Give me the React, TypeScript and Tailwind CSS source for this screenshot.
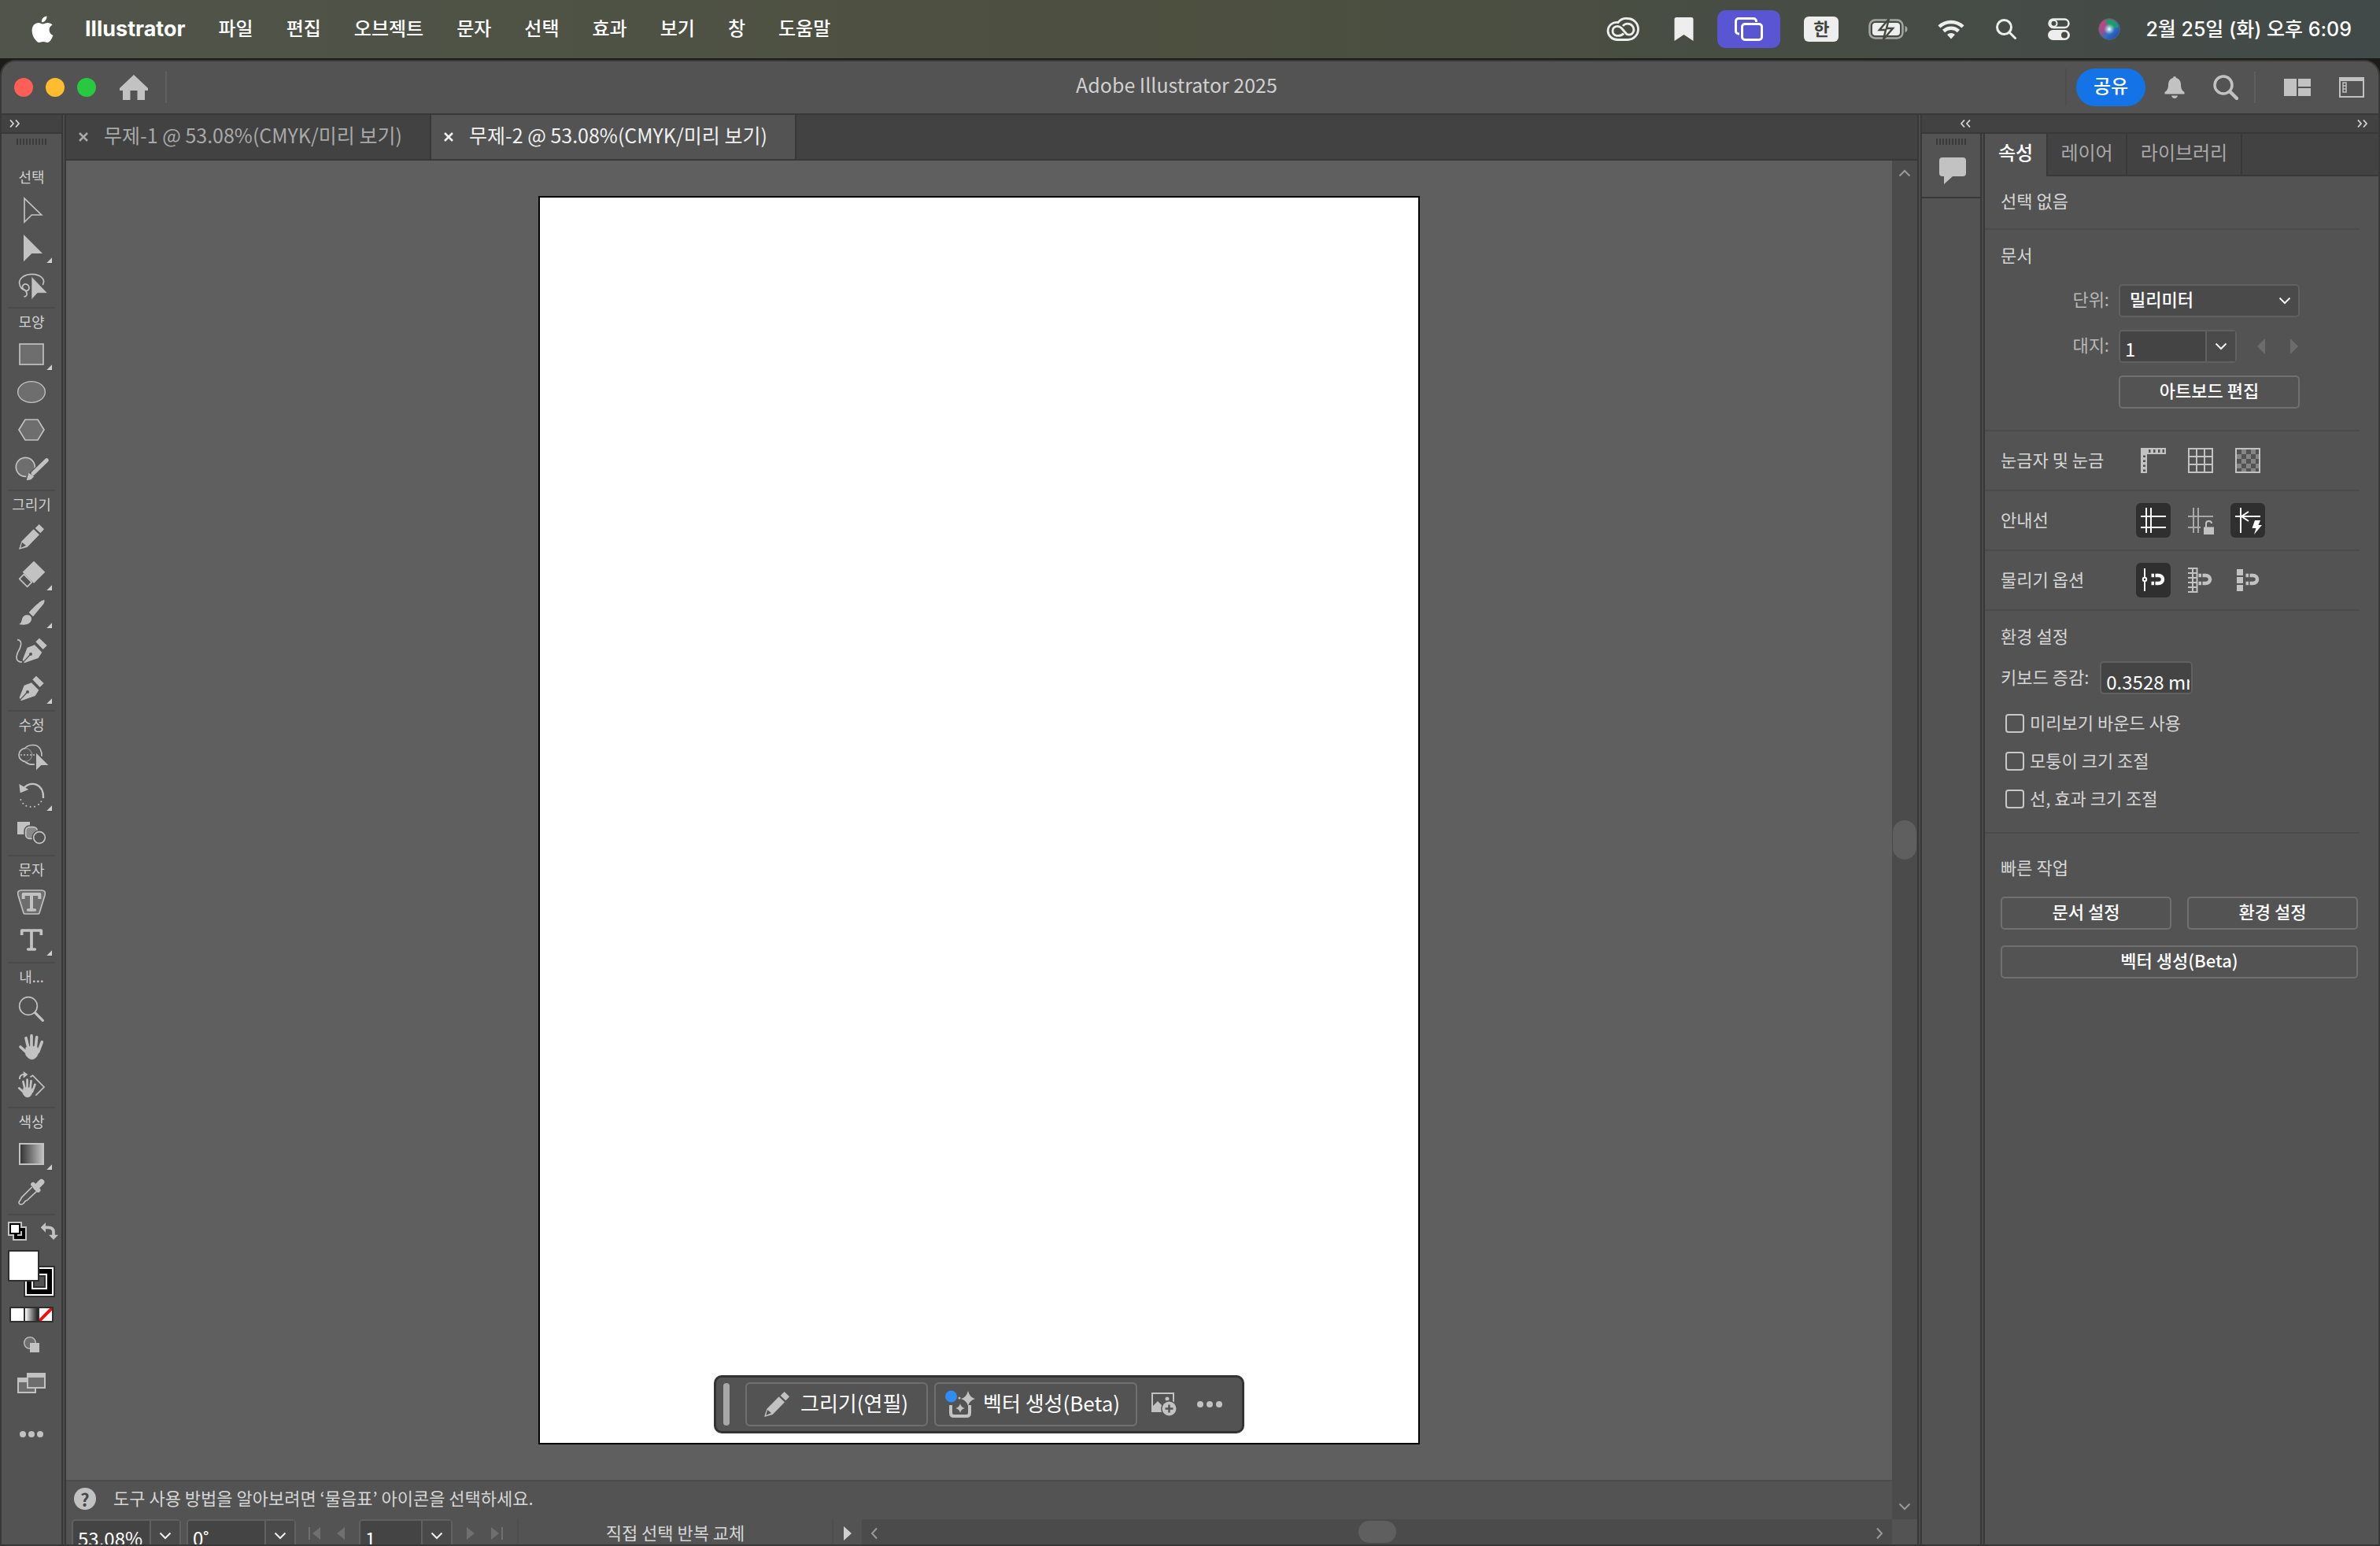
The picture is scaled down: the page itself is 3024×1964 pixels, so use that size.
import type { ReactNode } from "react";

const KR = "font-['Noto_Sans_CJK_KR',sans-serif]";
const MENU_FONT = "font-[Inter,'Noto_Sans_CJK_KR',sans-serif]";

const INK = "#c2c2c2";
const DIM = "#6e6e6e";
const PANEL = "#535353";

/* ---------- macOS menu bar ---------- */

const menus = ["파일", "편집", "오브젝트", "문자", "선택", "효과", "보기", "창", "도움말"];

function AppleLogo() {
  return (
    <svg viewBox="0 0 28 34" className="h-[34px] w-7" fill="#fff">
      <path d="M19.4 0.5c.3 2-.5 4-1.700 5.400-1.200 1.500-3.100 2.500-4.900 2.400-.3-1.900.6-3.900 1.700-5.200C15.800 1.600 17.800.6 19.400.5z" />
      <path d="M26.600 11.600c-3.100 1.900-4 4.200-4 6.500 0 3.100 1.800 5.800 4.900 7-.8 2.400-1.900 4.400-3.200 6.200-1.200 1.600-2.400 2.700-4.100 2.700-1.800 0-2.700-1-5.300-1-2.600 0-3.500 1-5.200 1-1.900 0-3.200-1.400-4.500-3.200C2.300 27.800.600 22.900.600 18.800.600 12.700 4.500 9 8.700 9c2.300 0 4.200 1.400 5.700 1.400 1.400 0 3.600-1.500 6.300-1.500 2.200 0 4.500.900 5.900 2.700z" />
    </svg>
  );
}

function CreativeCloud() {
  return (
    <svg viewBox="0 0 42 30" className="h-[30px] w-[42px]" fill="none" stroke="#eee" strokeWidth="2.800">
      <path d="M15 6.500A13 13 0 0 1 27 1.500A13.500 13.500 0 0 1 27 28.500H14A12 11.500 0 0 1 2 17A11 11 0 0 1 15 6.500z" />
      <path d="M22 20.500C18 25 8 24.500 8 17.500C8 11.500 15 9.500 19 13.500L26 21.500C33 24 37 17 33.500 11.500C30.500 7 24 7 21 11" />
    </svg>
  );
}

function StatusIcons() {
  return (
    <>
      <CreativeCloud />
      <svg viewBox="0 0 25 31" className="ml-[44px] h-[31px] w-[25px]" fill="#eee">
        <path d="M3 0h19a2.500 2.500 0 0 1 2.500 2.500V30L12.500 22 .5 30V2.500A2.500 2.500 0 0 1 3 0z" />
      </svg>
      <button aria-label="화면 공유" className="ml-[30px] flex h-12 w-20 items-center justify-center rounded-[10px] bg-[#5955d3]">
        <svg viewBox="0 0 36 30" className="h-[30px] w-9" fill="none" stroke="#fff" strokeWidth="3">
          <path d="M6 21H5a3.500 3.500 0 0 1-3.500-3.500V5A3.500 3.500 0 0 1 5 1.500h19A3.500 3.500 0 0 1 27.500 5v1" />
          <rect x="9.500" y="8.500" width="25" height="20" rx="3.500" />
        </svg>
      </button>
      <span className="ml-[30px] flex h-8 w-11 items-center justify-center rounded-md bg-[#eee] text-[22px] leading-8 font-bold text-[#3f443c]">한</span>
      <svg viewBox="0 0 50 26" className="ml-[38px] h-[26px] w-[50px]" fill="none">
        <rect x="1.500" y="1.500" width="42" height="23" rx="7" stroke="#a5a8a2" strokeWidth="2.500" />
        <rect x="5" y="5" width="35" height="16" rx="4" fill="#eee" />
        <path d="M46.500 9v8c2-.5 3-2 3-4s-1-3.500-3-4z" fill="#a5a8a2" />
        <path d="M26 0 14 14h8l-3 12 12-14h-8z" fill="#eee" stroke="#454940" strokeWidth="2.500" />
      </svg>
      <svg viewBox="0 0 34 26" className="ml-[38px] h-[26px] w-[34px]" fill="none" stroke="#eee" strokeWidth="4.500">
        <path d="M2 10a21.500 21.500 0 0 1 30 0" />
        <path d="M7.500 15.500a14 14 0 0 1 19 0" />
        <path d="M17 25.500l-5-5.500a7.500 7.500 0 0 1 10 0z" fill="#eee" stroke="none" />
      </svg>
      <svg viewBox="0 0 26 26" className="ml-10 h-[26px] w-[26px]" fill="none" stroke="#eee" strokeWidth="3" strokeLinecap="round">
        <circle cx="10.500" cy="10.500" r="9" />
        <path d="M17.500 17.500l7 7" />
      </svg>
      <svg viewBox="0 0 28 28" className="ml-10 h-7 w-7" fill="none">
        <rect x="1.500" y="1.500" width="25" height="10.500" rx="5.250" stroke="#eee" strokeWidth="2.500" />
        <circle cx="7.500" cy="6.750" r="4" stroke="#eee" strokeWidth="2" />
        <rect x="0" y="15" width="28" height="13" rx="6.500" fill="#eee" />
        <circle cx="21" cy="21.500" r="4" fill="#454940" />
      </svg>
      <svg viewBox="0 0 28 28" className="ml-9 h-7 w-7">
        <defs>
          <linearGradient id="siri" x1="0" y1="0" x2="1" y2="1">
            <stop offset="0" stopColor="#e0406c" />
            <stop offset="0.4" stopColor="#9a4f8c" />
            <stop offset="0.6" stopColor="#2d6fc4" />
            <stop offset="1" stopColor="#1e3fa8" />
          </linearGradient>
          <radialGradient id="siriGlow">
            <stop offset="0" stopColor="#fff" />
            <stop offset="1" stopColor="#8fe9ff" stopOpacity="0" />
          </radialGradient>
        </defs>
        <circle cx="14" cy="14" r="13.500" fill="url(#siri)" stroke="#55606b" />
        <path d="M14 14 9 2.500a13 13 0 0 1 17 9z" fill="#1f9a6e" />
        <circle cx="14" cy="14" r="7" fill="url(#siriGlow)" />
      </svg>
    </>
  );
}

function MenuBar() {
  return (
    <header className={`flex h-[74px] shrink-0 items-center bg-linear-to-r from-[#50544a] via-[#4d503f] to-[#424a49] pr-9 pl-10 text-2xl font-medium text-white ${MENU_FONT}`}>
      <AppleLogo />
      <nav className="ml-10 flex items-center gap-[42px]">
        <button className="text-[27px] font-bold">Illustrator</button>
        {menus.map((m) => (
          <button key={m} className="whitespace-nowrap">{m}</button>
        ))}
      </nav>
      <div className="ml-auto flex items-center">
        <StatusIcons />
        <time className="ml-8 text-[25px] leading-8 whitespace-nowrap">2월 25일 (화) 오후 6:09</time>
      </div>
    </header>
  );
}

/* ---------- window title bar ---------- */

function TitleBar() {
  return (
    <div className="grid h-[66px] shrink-0 grid-cols-[1fr_auto_1fr] items-center">
      <div className="flex items-center pl-4">
        <div className="flex gap-4">
          <button aria-label="닫기" className="size-6 rounded-full bg-[#ff5f57]" />
          <button aria-label="최소화" className="size-6 rounded-full bg-[#febc2e]" />
          <button aria-label="확대" className="size-6 rounded-full bg-[#28c840]" />
        </div>
        <button aria-label="홈" className="ml-[30px]">
          <svg viewBox="0 0 36 32" className="h-8 w-9" fill={INK}>
            <path d="M18 0 36 17v3h-4v12h-9.500V20h-9v12H4V20H0v-3z" />
          </svg>
        </button>
        <span className="ml-[22px] h-10 w-0.5 bg-[#606060]" />
      </div>
      <h1 className={`pr-[34px] pb-2 text-[25px] leading-8 text-[#d0d0d0] ${KR}`}>Adobe Illustrator 2025</h1>
      <div className="flex items-center justify-end pr-[18px]">
        <span className="h-12 w-0.5 bg-[#4d4d4d]" />
        <button className={`ml-3 h-12 w-[88px] rounded-full bg-[#1473e6] pb-1.5 text-2xl font-medium text-white ${KR}`}>공유</button>
        <button aria-label="알림" className="ml-6">
          <svg viewBox="0 0 26 28" className="h-7 w-[26px]" fill={INK}>
            <path d="M11 2a2 2 0 0 1 4 0c4 1 6 4.500 6 8.500 0 5 1.500 7.500 4.500 9.500v2.500H.5V20C3.500 18 5 15.500 5 10.500 5 6.500 7 3 11 2zM9 24.500h8c-.5 2-2 3.500-4 3.500s-3.500-1.500-4-3.500z" />
          </svg>
        </button>
        <button aria-label="검색" className="ml-9">
          <svg viewBox="0 0 32 32" className="size-8" fill="none" stroke={INK} strokeWidth="3.500" strokeLinecap="round">
            <circle cx="13" cy="13" r="11" />
            <path d="M21.500 21.500l8.500 8.500" strokeWidth="4.500" />
          </svg>
        </button>
        <span className="ml-5 h-10 w-0.5 bg-[#606060]" />
        <button aria-label="문서 정렬" className="ml-9">
          <svg viewBox="0 0 34 22" className="h-[22px] w-[34px]" fill={INK}>
            <path d="M0 0h16v22H0zM18 0h16v10H18zM18 12h16v10H18z" />
          </svg>
        </button>
        <button aria-label="작업 영역 전환" className="ml-9">
          <svg viewBox="0 0 32 26" className="h-[26px] w-8" fill="none" stroke={INK} strokeWidth="2">
            <path d="M1 1h30v24H1z" />
            <path d="M1 3h30" strokeWidth="4" />
            <path d="M5 7h4v12H5zM5 11h4M5 15h4" strokeWidth="1.500" />
          </svg>
        </button>
      </div>
    </div>
  );
}

/* ---------- shared pieces ---------- */

function DoubleChevron({ left = false }: { left?: boolean }) {
  return (
    <svg viewBox="0 0 13 10" className="h-2.5 w-[13px]" fill="none" stroke="#d2d2d2" strokeWidth="1.800">
      <path d={left ? "M5 .5 1 5l4 4.500M12 .5 8 5l4 4.500" : "M1 .5 5 5 1 9.500M8 .5 12 5 8 9.500"} />
    </svg>
  );
}

function Grip() {
  return (
    <div className="flex h-2 justify-center gap-0.5">
      {Array.from({ length: 10 }, (_, i) => (
        <span key={i} className="w-0.5 bg-[#3a3a3a]" />
      ))}
    </div>
  );
}

function Chevron({ dir = "down", tone = "#f0f0f0" }: { dir?: "down" | "up" | "left" | "right"; tone?: string }) {
  const d = {
    down: "M1.500 4.500 8 11l6.500-6.500",
    up: "M1.500 11.500 8 5l6.500 6.500",
    left: "M11 1.500 5 8l6 6.500",
    right: "M5 1.500 11 8l-6 6.500",
  }[dir];
  return (
    <svg viewBox="0 0 16 16" className="pointer-events-none size-4" fill="none" stroke={tone} strokeWidth="2">
      <path d={d} />
    </svg>
  );
}

function Gutter() {
  return <div className="w-1.5 shrink-0 border-x-2 border-[#383838] bg-[#4b4b4b]" />;
}

/* ---------- left toolbar ---------- */

type Tool = { name: string; y: number; flyout?: boolean; art: ReactNode };

const nib = (
  <>
    <path d="M86 654 104 608 132 598 160 626 146 648 92 667z" fill={INK} />
    <path d="M88 664 114 636" stroke={PANEL} strokeWidth="4" />
    <circle cx="117" cy="633" r="6" fill={PANEL} />
    <path d="M136 586 150 572 179 600 164 615z" fill={INK} />
  </>
);

const hand = (
  <g stroke={INK} strokeLinecap="round" fill={INK}>
    <path d="M78 750 100 770M99 716 107 750M120 707V750M140 713 136 750M160 731 146 768" strokeWidth="11" fill="none" />
    <path d="M99 752Q120 742 143 752L147 770Q140 796 122 797Q108 797 98 780z" strokeWidth="2" />
  </g>
);

const groups: { label: string; tools: Tool[] }[] = [
  {
    label: "선택",
    tools: [
      { name: "선택 도구", y: 306, art: <path d="M93 336V426L121 399H158z" fill="none" stroke={INK} strokeWidth="5" /> },
      { name: "직접 선택 도구", y: 450, flyout: true, art: <path d="M90 474V577L121 546H162z" fill={INK} /> },
      {
        name: "올가미 도구", y: 594, art: (
          <>
            <path d="M163 666C176 642 150 625 122 625C92 625 72 642 74 660C76 676 86 686 100 688C113 688 114 672 105 665C92 658 80 670 88 681C104 690 110 708 91 711" fill="none" stroke={INK} strokeWidth="5" />
            <path d="M120 634V722L143 697H181z" fill={INK} stroke={PANEL} strokeWidth="2" />
          </>
        ),
      },
    ],
  },
  {
    label: "모양",
    tools: [
      { name: "사각형 도구", y: 858, flyout: true, art: <rect x="75" y="891" width="90" height="78" fill={DIM} stroke={INK} strokeWidth="5" /> },
      { name: "원형 도구", y: 1002, art: <ellipse cx="120" cy="1074" rx="52" ry="40" fill={DIM} stroke={INK} strokeWidth="4" /> },
      { name: "다각형 도구", y: 1146, art: <path d="M72 1218 96 1179H144L168 1218 144 1257H96z" fill={DIM} stroke={INK} strokeWidth="5" /> },
      {
        name: "물방울 브러쉬 도구", y: 1290, art: (
          <>
            <circle cx="97" cy="1360" r="36" fill={DIM} stroke={INK} strokeWidth="5" />
            <path d="M180 1334 108 1404" stroke={PANEL} strokeWidth="26" />
            <path d="M178 1334 126 1384" stroke={INK} strokeWidth="15" strokeLinecap="round" />
            <path d="M109 1382 130 1396 118 1408 101 1411z" fill={INK} />
          </>
        ),
      },
    ],
  },
  {
    label: "그리기",
    tools: [
      {
        name: "연필 도구", y: 114, art: (
          <>
            <path d="M134 153 149 138 168 157 154 172z" fill={INK} />
            <path d="M128 157 150 178 104 225 72 234 82 203z" fill={INK} />
            <path d="M84 207 99 219 79 228z" fill={PANEL} />
          </>
        ),
      },
      {
        name: "지우개 도구", y: 258, flyout: true, art: (
          <>
            <path d="M86 320 129 278 172 320 129 363z" fill={INK} />
            <path d="M74 346 91 329 121 359 104 376z" fill="none" stroke={INK} strokeWidth="5" strokeLinejoin="round" />
          </>
        ),
      },
      {
        name: "페인트브러쉬 도구", y: 402, flyout: true, art: (
          <path d="M168 426Q172 431 166 442L126 490 110 474Q150 430 168 426zM108 484Q122 488 120 502C116 520 96 524 72 519C82 514 82 506 84 500C86 488 96 482 108 484z" fill={INK} />
        ),
      },
      {
        name: "곡률 도구", y: 546, art: (
          <>
            <path d="M66 578C90 580 78 610 68 626C58 650 64 663 84 663" fill="none" stroke={INK} strokeWidth="5" />
            {nib}
          </>
        ),
      },
      { name: "펜 도구", y: 690, flyout: true, art: <g transform="translate(-12 144)">{nib}</g> },
    ],
  },
  {
    label: "수정",
    tools: [
      {
        name: "도형 구성 도구", y: 954, art: (
          <>
            <path d="M95 992C106 978 140 972 153 994Q160 1006 159 1022M96 1044Q112 1056 132 1053" fill="none" stroke={INK} strokeWidth="5" />
            <path d="M97 992A25 25 0 0 1 97 1042" fill="none" stroke="#8a8a8a" strokeWidth="4" />
            <path d="M97 992A25 25 0 1 0 97 1042" fill="none" stroke={INK} strokeWidth="5" />
            <path d="M78 1017H134" stroke={INK} strokeWidth="5" strokeDasharray="6 6" />
            <path d="M138 1010V1075L157 1056H184z" fill={INK} />
          </>
        ),
      },
      {
        name: "회전 도구", y: 1098, flyout: true, art: (
          <>
            <path d="M92 1142C118 1114 168 1126 165 1182" fill="none" stroke={INK} strokeWidth="7" />
            <path d="M73 1128 77 1162 109 1149z" fill={INK} />
            <path d="M79 1188h.1M88 1202h.1M100 1211h.1M116 1215h.1M132 1214h.1M147 1206h.1M157 1195h.1" stroke={INK} strokeWidth="6" strokeLinecap="round" />
          </>
        ),
      },
      {
        name: "블렌드 도구", y: 1242, art: (
          <>
            <rect x="66" y="1272" width="48" height="48" fill={INK} />
            <rect x="98" y="1292" width="44" height="44" rx="14" fill="#8a8a8a" stroke={PANEL} strokeWidth="14" />
            <rect x="98" y="1292" width="44" height="44" rx="14" fill="#8a8a8a" stroke={INK} strokeWidth="5" />
            <circle cx="150" cy="1332" r="22" fill={PANEL} stroke={PANEL} strokeWidth="14" />
            <circle cx="150" cy="1332" r="22" fill={PANEL} stroke={INK} strokeWidth="5" />
          </>
        ),
      },
    ],
  },
  {
    label: "문자",
    tools: [
      {
        name: "문자 손질 도구", y: 126, art: (
          <>
            <path d="M80 153H160Q176 154 171 172L150 240Q149 243 144 243H96Q91 243 90 240L69 172Q64 154 80 153z" fill={DIM} stroke={INK} strokeWidth="5" />
            <path d="M89 186V168H151V186M120 168V228" fill="none" stroke={INK} strokeWidth="12" strokeLinejoin="round" />
            <path d="M107 228H133" stroke={INK} strokeWidth="11" strokeLinecap="round" />
          </>
        ),
      },
      {
        name: "문자 도구", y: 270, flyout: true, art: (
          <>
            <path d="M83 324V306H157V324M120 306V376" fill="none" stroke={INK} strokeWidth="11" strokeLinejoin="round" />
            <path d="M107 378H133" stroke={INK} strokeWidth="11" strokeLinecap="round" />
          </>
        ),
      },
    ],
  },
  {
    label: "내...",
    tools: [
      {
        name: "돋보기 도구", y: 534, art: (
          <>
            <circle cx="108" cy="594" r="34" fill="none" stroke={INK} strokeWidth="5" />
            <path d="M134 620 163 649" stroke={INK} strokeWidth="10" strokeLinecap="round" />
          </>
        ),
      },
      { name: "손 도구", y: 678, art: hand },
      {
        name: "보기 회전 도구", y: 822, art: (
          <>
            <g transform="translate(15 352) scale(.74)">{hand}</g>
            <path d="M115 865 125 859 168 903 136 935" fill="none" stroke={INK} strokeWidth="5" />
            <path d="M75 873C74 860 82 854 92 855" fill="none" stroke={INK} strokeWidth="6" />
            <path d="M89 843V869L106 855z" fill={INK} />
          </>
        ),
      },
    ],
  },
  {
    label: "색상",
    tools: [
      {
        name: "그레이디언트 도구", y: 1086, flyout: true, art: (
          <>
            <defs>
              <linearGradient id="toolGradient">
                <stop offset="0" stopColor="#303030" />
                <stop offset="1" stopColor="#c2c2c2" />
              </linearGradient>
            </defs>
            <rect x="75" y="1119" width="90" height="78" fill="url(#toolGradient)" stroke={INK} strokeWidth="6" />
          </>
        ),
      },
      {
        name: "스포이드 도구", y: 1230, art: (
          <>
            <path d="M122 1284 82 1324Q78 1334 72 1341Q72 1352 84 1350Q90 1348 96 1338Q100 1336 104 1334L140 1300" fill="none" stroke={INK} strokeWidth="5" />
            <path d="M158 1265 138 1285" stroke={INK} strokeWidth="22" strokeLinecap="round" />
            <path d="M126 1274 146 1296" stroke={INK} strokeWidth="17" strokeLinecap="round" />
          </>
        ),
      },
    ],
  },
];

function ToolButton({ tool }: { tool: Tool }) {
  const y = tool.y;
  return (
    <button aria-label={tool.name} className="h-12">
      <svg viewBox={`30 ${y} 180 144`} className="h-12 w-[60px]">
        {tool.art}
        {tool.flyout && <path d={`M198 ${y + 112}V${y + 132}H178z`} fill="#d0d0d0" />}
      </svg>
    </button>
  );
}

function ColorControls() {
  return (
    <div className="flex w-full flex-col items-center pt-2">
      <div className="flex w-full justify-between pr-1 pl-2">
        <button aria-label="초기값 칠과 선">
          <svg viewBox="30 156 72 72" className="size-6">
            <path d="M30 156H84V174H102V228H48V210H30z" fill={INK} />
            <path d="M54 180H96V222H54z" fill="#000" />
            <path d="M36 162H78V204H36z" fill="#000" />
            <path d="M42 168H72V198H42z" fill="#fff" />
            <path d="M81 192V207H66" fill="none" stroke={INK} strokeWidth="6" />
          </svg>
        </button>
        <button aria-label="칠과 선 교체">
          <svg viewBox="156 162 66 66" className="size-[22px]">
            <path d="M172 181H184Q204 181 204 198V212" fill="none" stroke={INK} strokeWidth="11" />
            <path d="M155 181 174 162V200zM186 209H222L204 228z" fill={INK} />
          </svg>
        </button>
      </div>
      <button aria-label="칠과 선" className="mt-3">
        <svg viewBox="30 264 180 180" className="size-[60px]">
          <path d="M90 324H210V444H90z" fill="#2f2f2f" />
          <path d="M96 330H204V438H96z" fill="#fff" />
          <path d="M102 336H198V432H102z" fill="#000" />
          <path d="M120 354H180V414H120z" fill="#fff" />
          <path d="M126 360H174V408H126z" fill="#2f2f2f" />
          <path d="M132 366H168V402H132z" fill={PANEL} />
          <path d="M30 264H150V384H30z" fill="#2f2f2f" />
          <path d="M36 270H144V378H36z" fill="#fff" />
        </svg>
      </button>
      <div className="mt-3 flex h-5 gap-0.5 bg-[#2f2f2f] p-0.5">
        <button aria-label="색상" className="w-4 bg-white" />
        <button aria-label="그레이디언트" className="w-4 bg-linear-to-r from-white to-[#222]" />
        <button aria-label="없음" className="w-4 bg-white">
          <svg viewBox="0 0 16 16" className="size-4">
            <path d="M0 16 16 0" stroke="#f01010" strokeWidth="4" />
          </svg>
        </button>
      </div>
      <button aria-label="그리기 모드" className="mt-[18px]">
        <svg viewBox="90 594 60 60" className="size-5">
          <circle cx="114" cy="618" r="22" fill={DIM} stroke={INK} strokeWidth="4" />
          <path d="M114 618H150V654H114z" fill={INK} />
        </svg>
      </button>
      <button aria-label="화면 모드 변경" className="mt-[26px]">
        <svg viewBox="66 732 108 78" className="h-[26px] w-9">
          <path d="M69 753H135V807H69z" fill={DIM} stroke={INK} strokeWidth="6" />
          <path d="M66 750H138V768H66z" fill={INK} />
          <path d="M105 735H171V789H105z" fill={DIM} stroke={INK} strokeWidth="6" />
          <path d="M102 732H174V750H102z" fill={INK} />
        </svg>
      </button>
      <button aria-label="도구 모음 편집" className="mt-12 flex gap-[3px]">
        <span className="size-2 rounded-full bg-[#c2c2c2]" />
        <span className="size-2 rounded-full bg-[#c2c2c2]" />
        <span className="size-2 rounded-full bg-[#c2c2c2]" />
      </button>
    </div>
  );
}

function Toolbar() {
  return (
    <aside className="flex w-[76px] shrink-0 flex-col">
      <button aria-label="도구 모음 펼치기" className="flex h-6 items-center border-b-2 border-[#383838] bg-[#424242] pl-2.5">
        <DoubleChevron />
      </button>
      <div className="flex flex-col items-center pt-1.5">
        <Grip />
        <div className="mt-6 flex flex-col items-center">
          {groups.map((g) => (
            <section key={g.label} className="flex flex-col items-center">
              <h2 className={`h-[34px] text-lg leading-8 text-[#cfcfcf] ${KR}`}>{g.label}</h2>
              {g.tools.map((t) => (
                <ToolButton key={t.name} tool={t} />
              ))}
              <span className="mt-1 h-0.5 w-[60px] bg-[#4a4a4a]" />
            </section>
          ))}
        </div>
        <ColorControls />
      </div>
    </aside>
  );
}

/* ---------- documents ---------- */

function DocTab({ title, active = false }: { title: string; active?: boolean }) {
  return (
    <div
      role="tab"
      aria-selected={active}
      className={`flex w-[464px] items-center border-r-2 border-[#383838] pl-4 ${active ? "bg-[#535353] text-[#f0f0f0]" : "bg-[#424242] text-[#a9a9a9]"}`}
    >
      <button aria-label="탭 닫기">
        <svg viewBox="0 0 12 12" className="size-3" fill="none" stroke="currentColor" strokeWidth="2.500">
          <path d="M1 1l10 10M11 1 1 11" />
        </svg>
      </button>
      <button className={`ml-5 pb-1.5 text-[25px] leading-8 whitespace-nowrap ${KR}`}>{title}</button>
    </div>
  );
}

function ContextBar() {
  const box = `flex h-14 items-center rounded-md border-2 border-[#707070] text-[26px] leading-8 whitespace-nowrap text-white ${KR}`;
  return (
    <div className="absolute bottom-3 left-1/2 flex h-[74px] w-[674px] -translate-x-1/2 items-center rounded-[10px] border-[3px] border-[#333] bg-[#535353] pl-[9px]">
      <span className="h-[54px] w-2 rounded-full bg-[#a8a8a8]" />
      <button className={`ml-5 w-[232px] pl-[22px] ${box}`}>
        <svg viewBox="72 138 96 96" className="size-8">
          <path d="M134 153 149 138 168 157 154 172zM128 157 150 178 104 225 72 234 82 203z" fill={INK} />
          <path d="M84 207 99 219 79 228z" fill={PANEL} />
        </svg>
        <span className="ml-3.5 pb-1">그리기(연필)</span>
      </button>
      <button className={`ml-2 w-[258px] pl-3 ${box}`}>
        <svg viewBox="0 0 38 36" className="h-9 w-[38px]">
          <path d="M7 19V29Q7 33 11 33H27Q31 33 31 29V19" fill="none" stroke={INK} strokeWidth="4" />
          <circle cx="7.500" cy="8" r="7.500" fill="#2f8cf3" />
          <path d="M29 1Q31 9 38 11Q31 13 29 20Q27 13 20 11Q27 9 29 1zM19 17Q20 22 25 23Q20 24 19 29Q18 24 13 23Q18 22 19 17z" fill={INK} />
          <circle cx="18" cy="10" r="1.500" fill={INK} />
        </svg>
        <span className="ml-2.5 pb-1">벡터 생성(Beta)</span>
      </button>
      <button aria-label="이미지 배치" className="ml-[18px]">
        <svg viewBox="0 0 32 30" className="h-[30px] w-8">
          <path d="M1 1H28V24H1z" fill="none" stroke={INK} strokeWidth="2" />
          <path d="M2 24V17L8 11 14 17 16 15V24z" fill={INK} />
          <circle cx="20" cy="8" r="2.500" fill={INK} />
          <circle cx="22.500" cy="20.500" r="10.500" fill={PANEL} />
          <circle cx="22.500" cy="20.500" r="9" fill={INK} />
          <path d="M22.500 15.500V25.500M17.500 20.500H27.500" stroke={PANEL} strokeWidth="2.500" />
        </svg>
      </button>
      <button aria-label="추가 옵션" className="ml-[26px] flex gap-1">
        <span className="size-2 rounded-full bg-[#c2c2c2]" />
        <span className="size-2 rounded-full bg-[#c2c2c2]" />
        <span className="size-2 rounded-full bg-[#c2c2c2]" />
      </button>
    </div>
  );
}

function ComboBox({ label, value, className }: { label: string; value: string; className: string }) {
  return (
    <div className={`flex h-[42px] shrink-0 rounded-[5px] border-2 border-[#616161] ${className}`}>
      <input aria-label={label} defaultValue={value} className={`min-w-0 flex-1 rounded-l-[3px] bg-[#444] pt-1.5 pl-1.5 text-2xl leading-7 text-white ${KR}`} />
      <button aria-label={`${label} 목록`} className="flex w-[38px] items-center justify-center border-l-2 border-[#616161] bg-[#4a4a4a]">
        <Chevron />
      </button>
    </div>
  );
}

function StatusRow() {
  return (
    <div className="flex h-8 shrink-0 overflow-hidden bg-[#535353]">
      <ComboBox label="확대/축소" value="53.08%" className="ml-[7px] w-[139px]" />
      <ComboBox label="회전" value="0˚" className="ml-[7px] w-[139px]" />
      <div className="ml-4 flex h-9 items-center gap-5">
        <button aria-label="첫 번째 대지">
          <svg viewBox="0 0 16 16" className="size-4" fill="#6f6f6f"><path d="M0 0h2v16H0zM15 0v16L5 8z" /></svg>
        </button>
        <button aria-label="이전 대지">
          <svg viewBox="0 0 10 16" className="h-4 w-2.5" fill="#6f6f6f"><path d="M10 0v16L0 8z" /></svg>
        </button>
      </div>
      <ComboBox label="대지 번호" value="1" className="ml-[18px] w-[119px]" />
      <div className="ml-[18px] flex h-9 items-center gap-5">
        <button aria-label="다음 대지">
          <svg viewBox="0 0 10 16" className="h-4 w-2.5" fill="#6f6f6f"><path d="M0 0v16L10 8z" /></svg>
        </button>
        <button aria-label="마지막 대지">
          <svg viewBox="0 0 16 16" className="size-4" fill="#6f6f6f"><path d="M14 0h2v16h-2zM1 0v16L11 8z" /></svg>
        </button>
      </div>
      <div className={`ml-[18px] h-8 w-[402px] shrink-0 border-x-2 border-[#4e4e4e] text-center text-[22px] leading-8 text-[#d6d6d6] ${KR}`}>직접 선택 반복 교체</div>
      <button aria-label="상태 표시" className="flex h-9 w-9 shrink-0 items-center justify-center">
        <svg viewBox="0 0 10 18" className="h-[18px] w-2.5" fill="#d0d0d0"><path d="M0 0v18L10 9z" /></svg>
      </button>
      <div className="flex h-8 min-w-0 flex-1 items-center bg-[#4b4b4b] px-2">
        <button aria-label="왼쪽으로 스크롤" className="mt-1"><Chevron dir="left" tone="#9a9a9a" /></button>
        <div className="flex flex-1 justify-center">
          <span className="h-7 w-12 rounded-full bg-[#5f5f5f]" />
        </div>
        <button aria-label="오른쪽으로 스크롤" className="mt-1"><Chevron dir="right" tone="#9a9a9a" /></button>
      </div>
      <div className="w-8 shrink-0" />
    </div>
  );
}

function DocumentArea() {
  return (
    <main className="flex min-w-0 flex-1 flex-col">
      <div role="tablist" className="flex h-[58px] shrink-0 border-b-2 border-[#383838] bg-[#424242]">
        <DocTab title="무제-1 @ 53.08%(CMYK/미리 보기)" />
        <DocTab title="무제-2 @ 53.08%(CMYK/미리 보기)" active />
      </div>
      <div className="flex min-h-0 flex-1">
        <div className="flex min-w-0 flex-1 flex-col">
          <div className="relative flex min-h-0 flex-1 justify-center bg-[#5f5f5f] py-[45px]">
            <div className="relative aspect-[1120/1585] h-full border-2 border-black bg-white">
              <ContextBar />
            </div>
          </div>
          <div className="flex h-[50px] shrink-0 items-center border-t-2 border-[#4c4c4c] bg-[#535353] pb-1 pl-2.5">
            <button aria-label="도움말" className={`flex size-7 items-center justify-center rounded-full bg-[#c2c2c2] text-[22px] leading-7 font-bold text-[#474747] ${KR}`}>?</button>
            <p className={`ml-[22px] pb-1 text-[22px] leading-8 text-[#d6d6d6] ${KR}`}>도구 사용 방법을 알아보려면 ‘물음표’ 아이콘을 선택하세요.</p>
          </div>
        </div>
        <div className="flex w-8 shrink-0 flex-col items-center bg-[#4b4b4b] py-2">
          <button aria-label="위로 스크롤"><Chevron dir="up" tone="#9a9a9a" /></button>
          <div className="flex flex-1 flex-col justify-center">
            <span className="h-[50px] w-[30px] rounded-full bg-[#5f5f5f]" />
          </div>
          <button aria-label="아래로 스크롤"><Chevron tone="#9a9a9a" /></button>
        </div>
      </div>
      <StatusRow />
    </main>
  );
}

/* ---------- right dock ---------- */

const magnet = (color: string) => (
  <>
    <path d="M18.500 10H22.500A5.500 5 0 0 1 22.500 20H18.500" fill="none" stroke={color} strokeWidth="4.500" />
    <path d="M13.500 7.800h3.500v4.400h-3.500zM13.500 17.800h3.500v4.400h-3.500z" fill={color} />
  </>
);

type Opt = { name: string; on?: boolean; art: ReactNode };

const optionRows: { label: string; options: Opt[] }[] = [
  {
    label: "눈금자 및 눈금",
    options: [
      {
        name: "눈금자", art: (
          <>
            <path d="M0 0H32V8H8V32H0z" fill={INK} />
            <path d="M10 2h2.500v4H10zM16 2h2.500v4H16zM22 2h2.500v4H22zM27.500 2H30v4h-2.500zM3 9.500h3V12H3zM3 15.500h3V18H3zM3 21.500h3V24H3zM3 27.500h3V30H3z" fill={PANEL} />
          </>
        ),
      },
      { name: "격자", art: <path d="M1 1H31V31H1zM11 1V31M21 1V31M1 11H31M1 21H31" fill="none" stroke={INK} strokeWidth="2" /> },
      {
        name: "투명도 격자", art: (
          <>
            <path d="M8 2h6v6H8zM20 2h6v6h-6zM2 8h6v6H2zM14 8h6v6h-6zM26 8h5v6h-5zM8 14h6v6H8zM20 14h6v6h-6zM2 20h6v6H2zM14 20h6v6h-6zM26 20h5v6h-5zM8 26h6v5H8zM20 26h6v5h-6z" fill="#858585" />
            <path d="M1 1H31V31H1z" fill="none" stroke={INK} strokeWidth="2" />
          </>
        ),
      },
    ],
  },
  {
    label: "안내선",
    options: [
      { name: "안내선 표시", on: true, art: <path d="M7 0V32M13 0V32M0 11H32M0 25H32" stroke="#fff" strokeWidth="2" /> },
      {
        name: "안내선 잠금", art: (
          <>
            <path d="M7 0V32M13 0V32M0 11H32M0 25H16" stroke="#a8a8a8" strokeWidth="2" />
            <path d="M23 25V20Q23 17 26.500 17Q30 17 30 20" fill="none" stroke={INK} strokeWidth="2" />
            <path d="M20 24.500H33V34H20z" fill={INK} />
          </>
        ),
      },
      {
        name: "특수 문자 안내선", on: true, art: (
          <>
            <path d="M7 0V32M0 11H32M17 5 8 11 17 17" fill="none" stroke="#fff" strokeWidth="2" />
            <path d="M25 16H32L29.500 22H34L24 34 26.500 26H21.500z" fill="#fff" />
          </>
        ),
      },
    ],
  },
  {
    label: "물리기 옵션",
    options: [
      {
        name: "점에 물리기", on: true, art: (
          <>
            <path d="M5 1V12M5 18V30" stroke="#fff" strokeWidth="2" />
            <circle cx="5" cy="15" r="2.200" fill="none" stroke="#fff" strokeWidth="2" />
            {magnet("#fff")}
          </>
        ),
      },
      {
        name: "격자에 물리기", art: (
          <>
            <path d="M6 0V32M11.500 0V32M0 1H12M0 7H12M0 13H12M0 19H12M0 25H12M0 31H12" stroke={INK} strokeWidth="2" />
            {magnet(INK)}
          </>
        ),
      },
      {
        name: "글리프에 물리기", art: (
          <>
            <path d="M2 2h8v8H2zM2 12h8v8H2zM2 22h8v8H2z" fill={INK} />
            {magnet(INK)}
          </>
        ),
      },
    ],
  },
];

function OptionRow({ label, options }: { label: string; options: Opt[] }) {
  return (
    <section className="mr-6 flex h-[76px] items-center border-b-2 border-[#4b4b4b] pl-5">
      <h3 className="w-[172px] pb-1">{label}</h3>
      <div className="flex gap-4">
        {options.map((o) => (
          <button key={o.name} aria-label={o.name} aria-pressed={!!o.on} className={`flex size-11 items-center justify-center rounded-md ${o.on ? "bg-[#2f2f2f]" : ""}`}>
            <svg viewBox="0 0 32 32" className="size-8 overflow-visible">{o.art}</svg>
          </button>
        ))}
      </div>
    </section>
  );
}

function PushButton({ children, className = "" }: { children: ReactNode; className?: string }) {
  return <button className={`h-[42px] rounded-[5px] border-2 border-[#707070] pb-1.5 leading-8 font-medium text-white ${className}`}>{children}</button>;
}

function PropertiesPanel() {
  const tab = "border-r-2 border-b-2 border-[#383838] pb-1.5";
  return (
    <div className={`flex w-[500px] shrink-0 flex-col text-[22px] leading-8 text-[#d6d6d6] ${KR}`}>
      <div role="tablist" className="flex h-[54px] bg-[#424242] text-[#a9a9a9]">
        <button role="tab" aria-selected="true" className="w-[78px] bg-[#535353] pb-2 text-2xl font-medium text-white">속성</button>
        <button role="tab" aria-selected="false" className={`w-[103px] border-l-2 text-2xl ${tab}`}>레이어</button>
        <button role="tab" aria-selected="false" className={`w-[146px] text-2xl ${tab}`}>라이브러리</button>
        <span className="flex-1 border-b-2 border-[#383838]" />
      </div>

      <section className="mr-6 h-[68px] border-b-2 border-[#4b4b4b] pt-3.5 pl-5">선택 없음</section>

      <section className="mr-6 border-b-2 border-[#4b4b4b] pt-[15px] pb-[27px] pl-5">
        <h3>문서</h3>
        <div className="mt-[22px] grid grid-cols-[138px_230px] gap-x-3 gap-y-4">
          <label htmlFor="unit" className="self-center pb-1.5 text-right text-[#b8b8b8]">단위:</label>
          <div className="relative">
            <select id="unit" className="h-[42px] w-full appearance-none rounded-[5px] border-2 border-[#616161] bg-[#4a4a4a] pb-1.5 pl-3 font-medium text-white">
              <option>밀리미터</option>
            </select>
            <span className="pointer-events-none absolute top-[13px] right-[11px]"><Chevron /></span>
          </div>
          <span className="self-center pb-1.5 text-right text-[#b8b8b8]">대지:</span>
          <div className="flex items-center">
            <ComboBox label="대지" value="1" className="w-[150px]" />
            <button aria-label="이전" className="ml-[26px]">
              <svg viewBox="0 0 10 20" className="h-5 w-2.5" fill="#6c6c6c"><path d="M10 0v20L0 10z" /></svg>
            </button>
            <button aria-label="다음" className="ml-8">
              <svg viewBox="0 0 10 20" className="h-5 w-2.5" fill="#6c6c6c"><path d="M0 0v20l10-10z" /></svg>
            </button>
          </div>
          <PushButton className="col-start-2">아트보드 편집</PushButton>
        </div>
      </section>

      {optionRows.map((r) => (
        <OptionRow key={r.label} {...r} />
      ))}

      <section className="mr-6 border-b-2 border-[#4b4b4b] pt-[15px] pb-[26px] pl-5">
        <h3>환경 설정</h3>
        <div className="mt-[17px] flex items-center">
          <label htmlFor="increment" className="pb-1">키보드 증감:</label>
          <span className="ml-3.5 flex h-[42px] w-[118px] rounded-[5px] border-2 border-[#616161] bg-[#444] pr-0.5 pl-1">
            <input id="increment" defaultValue="0.3528 mm" className="w-full min-w-0 bg-transparent pt-2 pl-0.5 text-2xl leading-6 text-white" />
          </span>
        </div>
        <div className="mt-[21px] flex flex-col gap-4 pl-1.5">
          {["미리보기 바운드 사용", "모퉁이 크기 조절", "선, 효과 크기 조절"].map((t) => (
            <label key={t} className="flex h-8 items-center gap-[7px]">
              <input type="checkbox" className="size-6 appearance-none rounded border-2 border-[#c8c8c8]" />
              <span className="pb-1">{t}</span>
            </label>
          ))}
        </div>
      </section>

      <section className="pt-[26px] pr-[26px] pl-5">
        <h3>빠른 작업</h3>
        <div className="mt-[22px] grid grid-cols-2 gap-5">
          <PushButton>문서 설정</PushButton>
          <PushButton>환경 설정</PushButton>
          <PushButton className="col-span-2">벡터 생성(Beta)</PushButton>
        </div>
      </section>
    </div>
  );
}

function RightDock() {
  return (
    <div className="flex shrink-0 flex-col">
      <div className="flex h-6 items-center border-b-2 border-[#383838] bg-[#424242]">
        <button aria-label="패널 펼치기" className="ml-[49px]"><DoubleChevron left /></button>
        <button aria-label="패널 접기" className="mr-3.5 ml-auto"><DoubleChevron /></button>
      </div>
      <div className="flex flex-1">
        <aside className="w-[74px]">
          <div className="h-[82px] border-b-2 border-[#383838] pt-1.5">
            <Grip />
            <button aria-label="주석" className="mt-4 ml-[22px] block">
              <svg viewBox="0 0 34 34" className="size-[34px]" fill={INK}>
                <path d="M4 0H30Q34 0 34 4V20Q34 24 30 24H17L6 34V24H4Q0 24 0 20V4Q0 0 4 0z" />
              </svg>
            </button>
          </div>
        </aside>
        <Gutter />
        <PropertiesPanel />
      </div>
    </div>
  );
}

export default function App() {
  return (
    <div className="flex h-screen flex-col overflow-hidden bg-[#1c1d19]">
      <MenuBar />
      <div className="mt-0.5 flex min-h-0 flex-1 flex-col overflow-hidden rounded-t-[20px] border-2 border-[#383838] bg-[#535353]">
        <TitleBar />
        <div className="flex min-h-0 flex-1 border-t-2 border-[#383838]">
          <Toolbar />
          <Gutter />
          <DocumentArea />
          <Gutter />
          <RightDock />
        </div>
      </div>
    </div>
  );
}
